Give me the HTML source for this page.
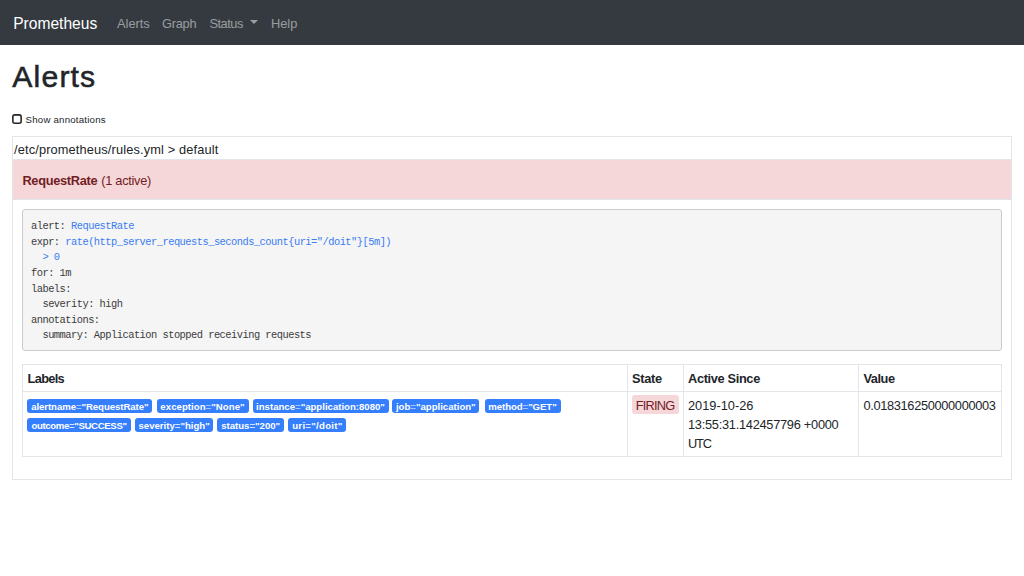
<!DOCTYPE html>
<html><head><meta charset="utf-8">
<style>
*{box-sizing:border-box;margin:0;padding:0}
html,body{width:1024px;height:576px;overflow:hidden;background:#fff}
body{font-family:"Liberation Sans",sans-serif;color:#212529;position:relative}
.a{position:absolute;white-space:nowrap}
#nav{position:absolute;left:0;top:0;width:1024px;height:44.8px;background:#343a40}
.brand{color:#fff;font-size:16px;line-height:16px}
.nl{color:rgba(255,255,255,.5);font-size:12.8px;line-height:13px}
.caret{position:absolute;left:250px;top:19.9px;width:0;height:0;border-left:4px solid transparent;border-right:4px solid transparent;border-top:4.4px solid rgba(255,255,255,.5)}
h1{font-size:32px;font-weight:normal;line-height:32px}
.cb{position:absolute;left:11.8px;top:113.9px}
.outer{position:absolute;left:12px;top:136px;width:1000px;height:344px;border:1px solid #e2e5e9}
.r1b{position:absolute;left:12px;top:159px;width:1000px;height:1px;background:#e2e5e9}
.pink{position:absolute;left:13px;top:160px;width:998px;height:39px;background:#f5d7d9}
.r2b{position:absolute;left:12px;top:199px;width:1000px;height:1px;background:#e2e5e9}
.t{font-size:12.8px;line-height:13px}
.pre{position:absolute;left:22px;top:209px;width:980px;height:142px;background:#f5f5f5;border:1px solid #ccc;border-radius:3px}
.code{font-family:"Liberation Mono",monospace;font-size:10.4px;line-height:15.57px;color:#3c3c3c;letter-spacing:-0.52px;white-space:pre}
.bl{color:#3a7cf2}
.inner{position:absolute;left:22px;top:364px;width:980px;height:93px;border:1px solid #e2e5e9}
.hl{position:absolute;height:1px;background:#e2e5e9}
.vl{position:absolute;width:1px;background:#e2e5e9}
.th{font-weight:bold;font-size:12.8px;line-height:13px}
.badge{position:absolute;height:14px;background:#357efc;color:#fff;font-weight:bold;font-size:9.6px;line-height:15px;border-radius:3px;text-align:center;white-space:nowrap}
.firing{position:absolute;left:632px;top:395.2px;width:46.5px;height:18.6px;background:#f5d7d9;border-radius:3px}
</style></head><body>
<div id="nav"></div>
<div class="a brand" style="left:13.2px;top:16px;font-size:15.6px">Prometheus</div>
<div class="a nl" style="left:117px;top:17px">Alerts</div>
<div class="a nl" style="left:162px;top:17px;letter-spacing:-0.25px">Graph</div>
<div class="a nl" style="left:209.5px;top:17px;letter-spacing:-0.5px">Status</div>
<div class="caret"></div>
<div class="a nl" style="left:271px;top:17px">Help</div>

<h1 class="a" style="left:12.3px;top:61.3px;font-size:30.2px;letter-spacing:1.15px;-webkit-text-stroke:0.55px #212529">Alerts</h1>
<svg class="cb" width="10" height="10" viewBox="0 0 10 10"><rect x="0.85" y="0.85" width="8.3" height="8.3" rx="2" ry="2" fill="none" stroke="#212529" stroke-width="1.55"/></svg>
<div class="a" style="left:25.6px;top:114.6px;font-size:9.7px;line-height:10px;letter-spacing:0.2px">Show annotations</div>

<div class="outer"></div>
<div class="r1b"></div>
<div class="a t" style="left:14px;top:142.7px;letter-spacing:0.14px">/etc/prometheus/rules.yml &gt; default</div>
<div class="pink"></div>
<div class="r2b"></div>
<div class="a t" style="left:22.4px;top:173.5px;color:#721c24;font-weight:bold;letter-spacing:-0.3px">RequestRate</div>
<div class="a t" style="left:101.3px;top:173.5px;color:#721c24;letter-spacing:-0.3px">(1 active)</div>

<div class="pre"></div>
<div class="a code" style="left:31px;top:219.3px">alert: <span class="bl">RequestRate</span>
expr: <span class="bl">rate(http_server_requests_seconds_count{uri="/doit"}[5m])</span>
<span class="bl">  &gt; 0</span>
for: 1m
labels:
  severity: high
annotations:
  summary: Application stopped receiving requests</div>

<div class="inner"></div>
<div class="hl" style="left:22px;top:391px;width:980px"></div>
<div class="vl" style="left:627px;top:364px;height:93px"></div>
<div class="vl" style="left:683px;top:364px;height:93px"></div>
<div class="vl" style="left:858px;top:364px;height:93px"></div>
<div class="a th" style="left:27.6px;top:371.6px;letter-spacing:-0.7px">Labels</div>
<div class="a th" style="left:632px;top:371.6px;letter-spacing:-0.3px">State</div>
<div class="a th" style="left:688px;top:371.6px;letter-spacing:-0.35px">Active Since</div>
<div class="a th" style="left:863.4px;top:371.6px;letter-spacing:-0.43px">Value</div>

<div class="badge" style="left:27.3px;top:399px;width:125px;letter-spacing:-0.06px">alertname<span style="opacity:.55">=</span>"RequestRate"</div>
<div class="badge" style="left:156.5px;top:399px;width:92px;letter-spacing:0.05px">exception<span style="opacity:.55">=</span>"None"</div>
<div class="badge" style="left:252.5px;top:399px;width:136px">instance<span style="opacity:.55">=</span>"application:8080"</div>
<div class="badge" style="left:392.3px;top:399px;width:87px">job<span style="opacity:.55">=</span>"application"</div>
<div class="badge" style="left:484.5px;top:399px;width:76px;letter-spacing:-0.07px">method<span style="opacity:.55">=</span>"GET"</div>
<div class="badge" style="left:27.3px;top:418px;width:103.5px;letter-spacing:-0.34px">outcome<span style="opacity:.8">=</span>"SUCCESS"</div>
<div class="badge" style="left:134.9px;top:418px;width:78.5px">severity<span style="opacity:.8">=</span>"high"</div>
<div class="badge" style="left:217.2px;top:418px;width:67px">status<span style="opacity:.8">=</span>"200"</div>
<div class="badge" style="left:288.4px;top:418px;width:58px;letter-spacing:0.28px">uri<span style="opacity:.8">=</span>"/doit"</div>

<div class="firing"></div>
<div class="a t" style="left:635.8px;top:398.9px;color:#721c24;letter-spacing:-0.8px">FIRING</div>
<div class="a t" style="left:688px;top:398.9px">2019-10-26</div>
<div class="a t" style="left:688px;top:417.6px;letter-spacing:-0.27px">13:55:31.142457796 +0000</div>
<div class="a t" style="left:688px;top:436.5px;letter-spacing:-1.2px">UTC</div>
<div class="a t" style="left:863.4px;top:398.9px;letter-spacing:-0.33px">0.018316250000000003</div>
</body></html>
